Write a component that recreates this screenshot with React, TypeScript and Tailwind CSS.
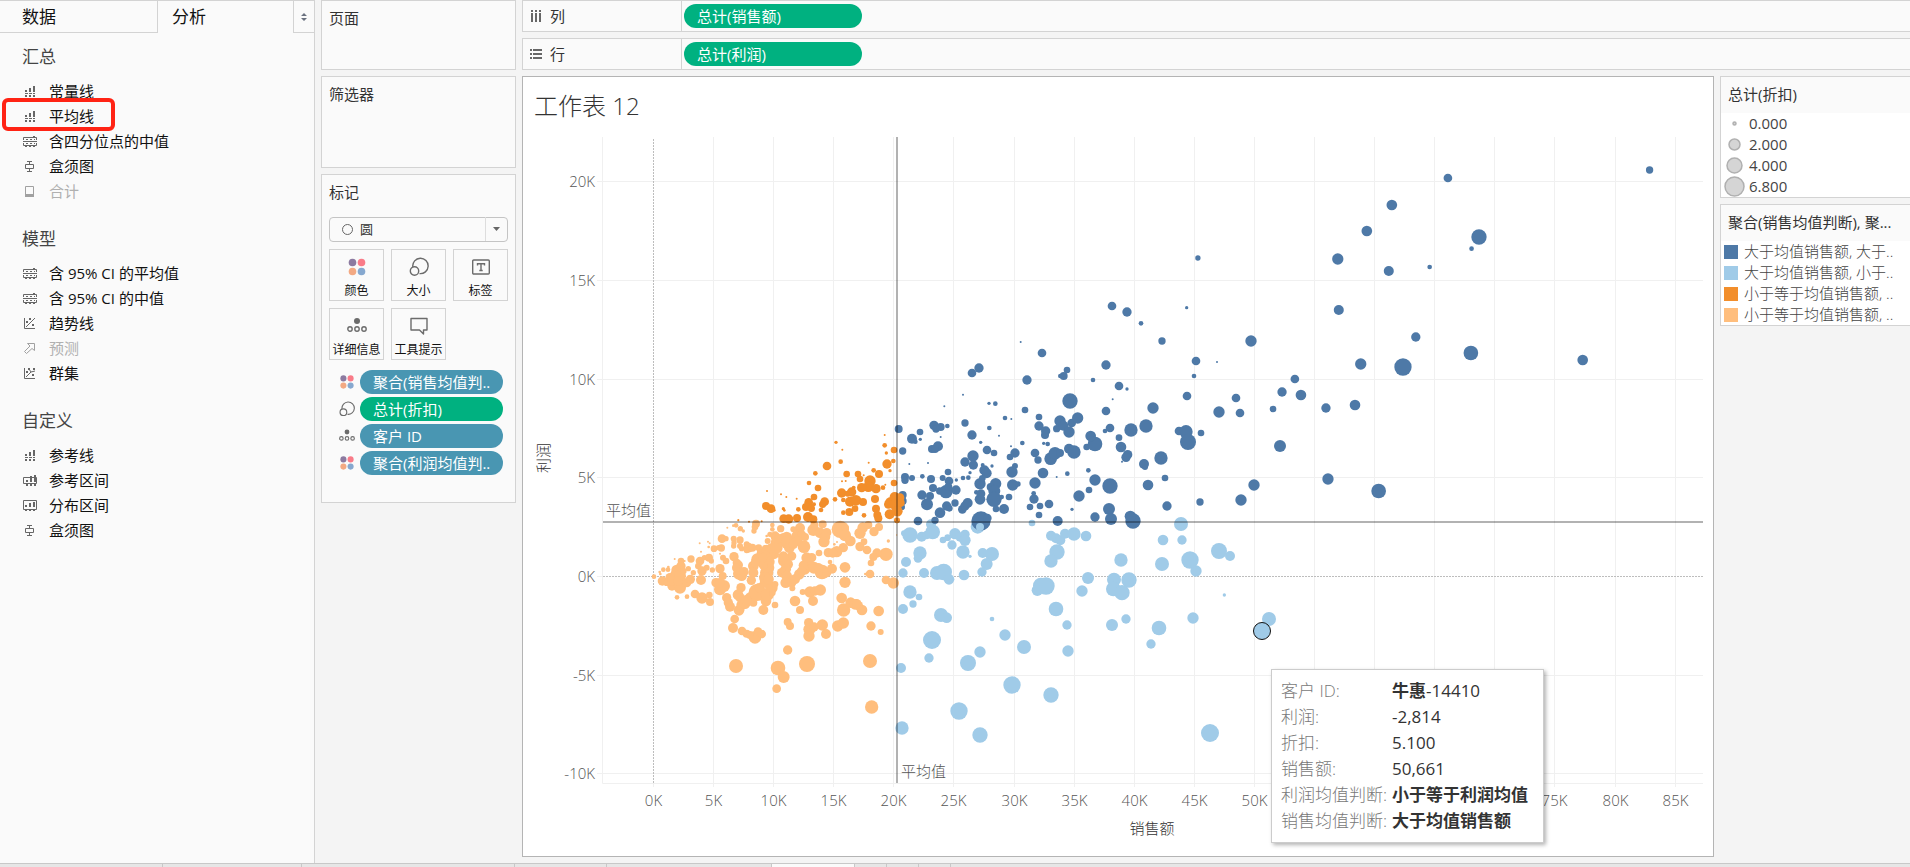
import React from "react";

const SANS = "font-['Open_Sans','Noto_Sans_CJK_SC',sans-serif]";

/* ── Sidebar icons ── */

type IconKind = "bars" | "quartile" | "box" | "total" | "trend" | "forecast" | "cluster" | "band" | "dist";

const dots = (y: number) => (
    <>
        <rect x="3" y={y} width="2" height="2" />
        <rect x="7" y={y} width="2" height="2" />
        <rect x="11" y={y} width="2" height="2" />
    </>
);

const PaneIcon: React.FC<{ kind: IconKind; muted?: boolean }> = ({ kind, muted }) => (
    <svg
        width="16"
        height="14"
        viewBox="0 0 16 14"
        className={muted ? "text-[#a0a0a0]" : "text-[#666]"}
        fill="currentColor"
        stroke="none"
        aria-hidden="true"
    >
        {kind === "bars" && (
            <>
                <rect x="2" y="5" width="2" height="2" />
                <rect x="6" y="3" width="2" height="4" />
                <rect x="10" y="1" width="2" height="6" />
                <path d="M2 8.5h10" stroke="currentColor" strokeDasharray="3 1" />
                <rect x="2" y="10" width="2" height="2" />
                <rect x="6" y="10" width="2" height="2" />
                <rect x="10" y="10" width="2" height="2" />
            </>
        )}
        {kind === "quartile" && (
            <>
                <path d="M.5 5V2.5h13V5M.5 8v2.5h13V8" fill="none" stroke="currentColor" />
                <path d="M0 6.500h14" stroke="currentColor" />
                <path d="M3 4.500h9M3 8.500h9" stroke="currentColor" strokeDasharray="2 2" />
                <rect x="2" y="11" width="2" height="1" />
                <rect x="6" y="11" width="2" height="1" />
                <rect x="10" y="11" width="2" height="1" />
                <rect x="10" y="1" width="2" height="1" />
            </>
        )}
        {kind === "box" && (
            <path d="M4 1.500h5M6.500 1.500V4M2.500 4.500h8v4h-8zM6.500 9v3M4 11.500h5" fill="none" stroke="currentColor" />
        )}
        {kind === "total" && (
            <>
                <path d="M2.500 1.500h8v10h-8z" fill="none" stroke="currentColor" />
                <rect x="2" y="9" width="9" height="3" />
            </>
        )}
        {(kind === "trend" || kind === "cluster") && (
            <path d="M1.500 1v10.500H12" fill="none" stroke="currentColor" />
        )}
        {kind === "trend" && (
            <>
                <path d="M3 10L12 1" stroke="currentColor" />
                <rect x="3" y="4" width="2" height="2" />
                <rect x="6" y="1" width="2" height="2" />
                <rect x="9" y="7" width="2" height="2" />
            </>
        )}
        {kind === "cluster" && (
            <>
                <path d="M3 10l5-5 4-1M6 2l2 3" stroke="currentColor" fill="none" />
                <rect x="3" y="4" width="2" height="2" />
                <rect x="5" y="1" width="2" height="2" />
                <rect x="10" y="1" width="2" height="2" />
                <rect x="9" y="7" width="2" height="2" />
            </>
        )}
        {kind === "forecast" && (
            <path d="M4.500 1.500h7v7l-2.500-2-5.500 5-2-2 5.500-5.500z" fill="none" stroke="currentColor" />
        )}
        {kind === "band" && (
            <>
                <path d="M.5 3.500h13v6H.5z" fill="none" stroke="currentColor" />
                <rect x="3" y="6" width="2" height="2" />
                <rect x="7" y="2" width="2" height="6" />
                <rect x="11" y="1" width="2" height="7" />
                {dots(10)}
            </>
        )}
        {kind === "dist" && (
            <>
                <path d="M.5 1.500h13v9H.5z" fill="none" stroke="currentColor" />
                <rect x="2" y="6" width="2" height="2" />
                <rect x="6" y="4" width="2" height="4" />
                <rect x="10" y="3" width="2" height="5" />
                <rect x="2" y="11" width="2" height="1" />
                <rect x="6" y="11" width="2" height="1" />
                <rect x="10" y="11" width="2" height="1" />
            </>
        )}
    </svg>
);

/* ── Marks card icons ── */

type MarkKind = "color" | "size" | "label" | "detail" | "tooltip";

const MarkIcon: React.FC<{ kind: MarkKind; small?: boolean }> = ({ kind, small }) => (
    <svg width={small ? 16 : 20} height={small ? 16 : 20} viewBox="0 0 20 20" fill="none" stroke="#6b6b6b" strokeWidth="1.4" aria-hidden="true">
        {kind === "color" && (
            <g stroke="none">
                <circle cx="5.500" cy="5.500" r="3.800" fill="#8c7aa0" />
                <circle cx="14.500" cy="5.500" r="3.800" fill="#f97b88" />
                <circle cx="5.500" cy="14.500" r="3.800" fill="#f3a983" />
                <circle cx="14.500" cy="14.500" r="3.800" fill="#86a8cf" />
            </g>
        )}
        {kind === "size" && (
            <>
                <path d="M3.800 9.800A7.700 7.700 0 1 1 10.500 16.600" />
                <circle cx="5.500" cy="14" r="4.200" />
            </>
        )}
        {kind === "label" && (
            <>
                <rect x="1.700" y="3" width="16.600" height="14" rx="1" />
                <path d="M6.500 8.500V6.700h7v1.800M10 6.700v7M8.300 13.500h3.400" />
            </>
        )}
        {kind === "detail" && (
            <>
                <circle cx="10" cy="5" r="3" fill="#6b6b6b" stroke="none" />
                <circle cx="3" cy="13" r="2.200" />
                <circle cx="10" cy="13" r="2.200" />
                <circle cx="17" cy="13" r="2.200" />
            </>
        )}
        {kind === "tooltip" && <path d="M2 2.500h16v11.500h-3.500v4l-4-4H2z" strokeLinejoin="round" />}
    </svg>
);

/* ── Data ── */

interface PaneItem {
    label: string;
    icon: IconKind;
    muted?: boolean;
    marked?: boolean;
}

const sections: { title: string; items: PaneItem[] }[] = [
    {
        title: "汇总",
        items: [
            { label: "常量线", icon: "bars" },
            { label: "平均线", icon: "bars", marked: true },
            { label: "含四分位点的中值", icon: "quartile" },
            { label: "盒须图", icon: "box" },
            { label: "合计", icon: "total", muted: true },
        ],
    },
    {
        title: "模型",
        items: [
            { label: "含 95% CI 的平均值", icon: "quartile" },
            { label: "含 95% CI 的中值", icon: "quartile" },
            { label: "趋势线", icon: "trend" },
            { label: "预测", icon: "forecast", muted: true },
            { label: "群集", icon: "cluster" },
        ],
    },
    {
        title: "自定义",
        items: [
            { label: "参考线", icon: "bars" },
            { label: "参考区间", icon: "band" },
            { label: "分布区间", icon: "dist" },
            { label: "盒须图", icon: "box" },
        ],
    },
];

const markButtons: { label: string; kind: MarkKind }[] = [
    { label: "颜色", kind: "color" },
    { label: "大小", kind: "size" },
    { label: "标签", kind: "label" },
    { label: "详细信息", kind: "detail" },
    { label: "工具提示", kind: "tooltip" },
];

const markPills: { label: string; kind: MarkKind; color: string }[] = [
    { label: "聚合(销售均值判..", kind: "color", color: "bg-[#4996b2]" },
    { label: "总计(折扣)", kind: "size", color: "bg-[#00b180]" },
    { label: "客户 ID", kind: "detail", color: "bg-[#4996b2]" },
    { label: "聚合(利润均值判..", kind: "color", color: "bg-[#4996b2]" },
];

const sizeLegend = [
    { label: "0.000", r: 1.5 },
    { label: "2.000", r: 5.5 },
    { label: "4.000", r: 7.5 },
    { label: "6.800", r: 9.5 },
];

const colorLegend = [
    { label: "大于均值销售额, 大于..", color: "bg-[#4e79a7]" },
    { label: "大于均值销售额, 小于..", color: "bg-[#a0cbe8]" },
    { label: "小于等于均值销售额, ..", color: "bg-[#f28e2b]" },
    { label: "小于等于均值销售额, ..", color: "bg-[#ffbe7d]" },
];

const tooltipRows = [
    { label: "客户 ID:", strong: "牛惠", rest: "-14410" },
    { label: "利润:", rest: "-2,814" },
    { label: "折扣:", rest: "5.100" },
    { label: "销售额:", rest: "50,661" },
    { label: "利润均值判断:", strong: "小于等于利润均值" },
    { label: "销售均值判断:", strong: "大于均值销售额" },
];

const sheetTabs = [
    { width: "w-[163px]" },
    { width: "w-[139px]" },
    { width: "w-[213px]" },
    { width: "w-[92px]" },
    { width: "w-[165px]" },
    { width: "w-[83px]", active: true },
    { width: "w-8" },
    { width: "w-8" },
    { width: "w-8" },
];

/* Each series lists "x,y,radius" marks relative to its own origin. */
interface Series {
    fill: string;
    ox: number;
    oy: number;
    sx: number;
    marks: string;
}

const series: Series[] = [
    {
        fill: "#ffbe7d", ox: 520, oy: 400, sx: 3,
        marks: `402,527,7 419,513,4 421,519,4 430,506,7 444,506,7 445,498,4 464,474,3 427,540,14 440,545,10 450,530,14 456,555,14
465,520,14 470,507,16 483,480,10 483,495,14 480,560,18 480,525,18 471,589,7 501,587,7 494,480,3 500,545,14 513,474,11 505,503,8
511,535,14 520,515,8 525,579,13 539,427,3 543,452,3 540,480,13 535,495,10 546,510,14 543,537,15 546,591,17 564,422,3 569,427,3
566,438,4 553,470,8 567,470,12 574,480,8 560,500,9 568,582,10 570,603,12 582,443,10 604,441,11 606,413,13 596,440,8 618,413,8
609,470,9 618,480,10 600,503,14 577,507,8 588,545,14 608,525,12 600,565,18 612,555,18 600,458,3 622,380,3 640,374,4 648,373,7
655,357,3 661,383,8 670,390,5 641,413,9 642,425,8 641,435,8 660,417,11 660,435,9 665,443,8 642,467,14 650,485,12 655,492,14
657,518,18 665,524,16 655,507,14 663,560,14 654,581,16 620,590,14 625,605,14 630,617,15 657,628,16 665,612,16 675,608,16
690,590,16 708,368,12 702,390,8 705,378,10 680,430,9 685,440,15 680,448,9 716,440,10 697,440,12 725,457,15 712,475,18 700,495,16
700,515,15 694,538,14 712,574,26 735,545,16 740,515,20 745,500,18 738,600,16 742,580,20 730,627,15 765,612,10 757,372,7
782,383,11 757,385,7 740,405,4 750,400,8 743,420,9 765,405,14 770,425,18 740,447,16 755,442,16 762,460,15 738,470,18 748,482,16
755,560,18 765,550,10 730,492,14 790,412,16 800,408,16 805,425,22 808,440,16 840,381,15 830,405,16 845,402,14 855,408,12
852,437,19 820,385,9 833,420,15 790,480,16 800,475,12 803,490,16 815,465,14 790,467,16 797,505,16 785,515,14 800,525,16
797,545,16 815,545,14 825,535,15 817,562,9 838,520,16 855,505,16 865,490,16 860,470,16 875,470,14 882,500,18 906,513,22
895,500,14 920,515,14 936,503,15 930,483,7 897,456,10 880,387,18 883,373,12 908,370,12 900,395,16 920,395,14 915,407,16
912,422,17 961,385,26 975,381,12 975,403,18 991,420,16 943,430,4 951,423,3 970,440,14 950,452,17 925,455,14 938,456,14
975,499,16 975,544,17 965,591,16 1036,519,4 1050,519,13 1053,486,10 1098,460,20 1071,456,14 1060,468,12 1041,447,13 1020,437,14
1032,422,10 1020,397,17 1028,380,16 1045,372,12 1062,392,14 1077,378,12 1105,420,5 1130,402,2 1098,537,13 1120,546,17
848,573,9 870,573,17 885,570,14 901,567,17 879,600,15 825,600,16 840,627,12 992,605,16 971,627,20 1005,610,16 1026,627,16
1015,614,14 1076,630,16 644,654,13 639,681,15 666,690,13 680,698,12 705,709,19 690,702,12 714,692,13 725,699,13 803,663,12
810,675,12 866,665,14 868,685,18 882,678,14 907,672,17 867,705,17 918,699,15 953,675,17 970,666,17 1053,675,14 1082,693,9
803,747,14 648,795,21 774,801,22 861,789,24 791,828,18 770,863,13 1050,780,21 1055,918,20 735,440,8 770,440,18 660,590,14
700,605,12 735,530,18 745,535,16 718,560,14 850,493,14 845,510,14 728,470,14 706,485,14 770,412,16 648,500,12 672,512,14
455,540,14 475,540,14 490,510,10 600,545,14 678,598,16 757,575,10 820,430,14 1010,608,14`,
    },
    {
        fill: "#a0cbe8", ox: 880, oy: 500, sx: 3,
        marks: `153,70,15 72,97,9 90,102,23 125,107,15 140,102,13 158,93,22 189,117,10 203,110,10 225,98,17 255,100,14 240,108,14
255,118,17 216,132,14 120,156,20 114,172,13 249,153,20 270,166,5 308,156,15 336,159,21 320,189,18 306,213,14 78,183,15
69,216,14 132,216,15 171,216,21 191,213,25 207,235,16 252,222,16 90,273,20 117,288,10 99,309,11 69,324,15 183,342,21 200,350,16
336,354,7 156,417,27 147,471,14 63,501,15 264,486,24 300,453,17 375,402,17 432,438,21 396,552,26 237,630,26 66,681,20
300,702,23 513,582,23 564,450,17 561,372,14 528,324,22 483,254,24 498,255,26 472,268,17 606,270,17 624,231,18 456,66,10
293,77,21 513,104,15 528,112,15 541,118,15 555,98,15 582,99,20 618,105,16 531,153,23 513,180,20 723,177,20 702,236,21
747,237,23 700,264,22 726,275,23 696,372,18 738,354,14 837,381,22 813,429,14 939,351,17 849,117,16 906,117,14 903,69,21
846,189,21 930,177,26 948,210,17 1017,150,24 1050,165,15 1033,282,5 1167,354,21 990,696,27`,
    },
    {
        fill: "#4e79a7", ox: 880, oy: 280, sx: 3,
        marks: `56,444,12 68,510,11 96,473,15 106,482,7 120,453,10 121,475,5 162,433,14 168,444,11 182,438,12 202,435,7 193,376,3
249,341,3 327,367,5 346,368,7 375,411,7 394,414,3 255,426,11 276,462,14 328,441,7 357,464,3 302,484,5 182,468,3 156,504,12
174,496,15 165,504,12 88,549,3 144,546,3 75,588,12 75,598,11 96,591,9 127,586,7 153,594,12 188,591,9 204,573,10 207,600,13
229,597,5 249,591,7 265,590,7 270,575,5 255,543,14 279,525,17 280,552,14 308,552,6 336,555,5 321,507,13 342,516,10 313,568,15
320,577,15 390,528,10 405,516,14 393,496,3 427,486,7 405,555,9 396,573,17 159,621,12 126,642,14 150,645,12 141,670,18
179,630,11 198,632,20 228,627,14 205,618,12 200,675,14 208,682,10 225,666,11 247,685,13 255,675,14 263,666,15 180,695,16
114,720,13 165,718,11 300,608,17 307,592,10 289,634,7 300,655,16 303,638,13 347,608,17 332,618,12 343,630,18 342,655,23
365,648,7 387,648,10 348,684,10 372,684,15 398,612,17 414,609,8 303,720,29 322,711,13 68,642,12 68,660,12 65,678,10
465,516,13 474,537,11 489,576,16 465,606,17 461,637,7 462,654,14 450,678,10 480,675,10 507,669,13 477,702,10 533,720,15
530,588,3 562,578,7 576,685,5 597,645,17 625,568,7 645,597,17 690,615,23 627,627,10 645,708,14 687,684,18 693,714,18
759,720,23 751,706,17 477,408,10 477,435,14 497,450,14 495,462,12 540,420,17 530,443,11 550,434,15 567,453,17 575,426,13
593,411,17 491,487,5 503,489,7 512,533,19 525,517,19 540,516,12 567,503,15 582,513,20 620,498,10 645,489,22 632,465,16
675,450,7 690,441,13 717,470,10 723,498,16 743,521,14 738,529,14 726,542,3 792,549,15 795,558,9 804,612,16 843,531,20
855,591,10 861,675,14 753,447,20 798,435,20 819,381,17 678,390,13 698,355,3 717,315,13 741,324,5 639,297,7 678,252,14
570,360,23 551,285,12 541,285,7 561,267,10 441,297,14 435,387,10 486,216,13 422,183,3 276,276,13 297,261,14 696,75,13
741,93,14 783,127,7 846,180,11 920,80,5 1113,180,17 948,240,13 1011,243,3 942,285,7 921,345,13 1068,351,13 1017,393,17
1080,396,13 1179,384,10 963,456,10 897,450,13 918,452,20 924,483,24 960,663,11 1083,657,17 1122,612,17`,
    },
    {
        fill: "#4e79a7", ox: 1180, oy: 120, sx: 2.96,
        marks: `296,975,18 302,813,14 340,774,13 358,822,16 432,861,14 518,852,16 438,1074,17 588,1110,22 535,729,17 660,738,26
698,648,14 861,696,22 1192,717,16 470,567,15 618,450,15 739,438,7 863,383,7 885,348,23 467,414,17 553,330,16 627,252,16
793,171,13 1390,147,11 53,411,8`,
    },
    {
        fill: "#f28e2b", ox: 520, oy: 400, sx: 3,
        marks: `948,124,5 967,146,3 1094,102,3 1094,133,7 1099,156,5 1122,147,10 962,182,7 1046,185,3 1120,180,7 1101,189,14
921,195,13 886,217,7 980,219,10 1014,219,10 1031,223,3 1061,208,7 1077,219,12 1110,209,5 867,246,7 894,261,10 966,241,3
977,240,3 1020,234,10 1050,240,17 1045,257,16 1025,260,14 1068,263,14 1089,260,7 1096,251,3 1122,246,10 741,270,3 783,280,3
799,288,3 830,293,3 882,288,10 965,276,14 995,273,14 1001,260,6 983,278,9 945,295,7 970,297,7 866,304,13 914,302,13 908,310,11
990,302,15 1008,298,16 1029,303,12 1065,294,12 1068,323,12 1072,342,12 1075,352,12 1032,343,7 903,327,7 882,310,6 858,318,12
874,322,11 835,325,7 790,323,5 793,328,4 738,315,12 753,323,13 763,328,4 1005,323,10 988,333,12 970,335,7 791,353,13
806,354,14 831,351,12 864,348,15 880,355,12 687,362,3 655,358,3 725,361,3 1112,305,17 1124,288,15 1105,310,13 1128,312,18
1109,340,15 1132,331,16 1140,290,13 1142,305,12 1131,358,9`,
    },
    {
        fill: "#a0cbe8", ox: 880, oy: 500, sx: 3,
        marks: "300,78,12",
    },
];

const parseMarks = (s: Series) =>
    s.marks.split(/\s+/).map((m) => {
        const [x, y, r] = m.split(",").map(Number);
        return { x: s.ox + x / s.sx, y: s.oy + y / 3, r: r / 3 };
    });

const xTicks = Array.from({ length: 18 }, (_, i) => ({ value: i * 5, x: Math.floor(653.4 + i * 60.1) + 0.5 }));
const yTicks = [20, 15, 10, 5, 0, -5, -10].map((v) => ({ label: `${v}K`, y: Math.floor(575.4 - v * 19.74) + 0.5 }));

// the open tooltip sits over these axis labels
const isCovered = (value: number) => value > 50 && value < 75;

/* ── Scatter chart ── */

const Scatter: React.FC = () => (
    <svg viewBox="523 130 1190 725" className="block w-full h-auto font-light" role="img" aria-label="工作表 12">
        <g stroke="#f0f0f0" fill="none">
            {xTicks.map((t) => (
                <path key={t.value} d={`M${t.x} 136V786`} />
            ))}
            {yTicks.map((t) => (
                <path key={t.label} d={`M597 ${t.y}H1703`} />
            ))}
            <path d="M602.5 136V782.5H1703" />
        </g>
        <path d="M653.5 136V782M603 575.5H1703" fill="none" stroke="#fff" />
        <path d="M653.5 138V782M603 575.5H1703" fill="none" stroke="#bdbdbd" strokeDasharray="2 1" />

        {series.map((s, i) => (
            <g key={i} fill={s.fill}>
                {parseMarks(s).map((m, j) => (
                    <circle key={j} cx={m.x} cy={m.y} r={m.r} />
                ))}
            </g>
        ))}
        <circle cx="1262" cy="630" r="8.500" fill="#a0cbe8" stroke="#111" />

        {/* Average lines */}
        <path d="M603 521H1703M897 136V782" stroke="#000" strokeOpacity="0.3" strokeWidth="2" />

        <g className="fill-[#555] text-[15px]">
            {yTicks.map((t) => (
                <text key={t.label} x="595" y={t.y + 5} textAnchor="end">{t.label}</text>
            ))}
            {xTicks.filter((t) => !isCovered(t.value)).map((t) => (
                <text key={t.value} x={t.x} y="805" textAnchor="middle">{`${t.value}K`}</text>
            ))}
            <text x="606" y="515">平均值</text>
            <text x="901" y="776">平均值</text>
        </g>
        <g className="fill-[#333] text-[15px]">
            <text x="1152" y="833" textAnchor="middle">销售额</text>
            <text transform="translate(549 457) rotate(-90)" textAnchor="middle">利润</text>
        </g>
    </svg>
);

const Shelf: React.FC<{ label: string; pill: string; vertical?: boolean }> = ({ label, pill, vertical }) => (
    <div className="flex h-8 border border-r-0 border-[#d3d3d3] bg-[#fafafa]">
        <div className="flex w-[159px] items-center gap-2 border-r border-[#d3d3d3] pl-[7px] text-[15px] text-[#333]">
            <svg width="12" height="12" viewBox="0 0 12 12" fill="#666" aria-hidden="true">
                {vertical ? (
                    <path d="M1 0h2v2H1zM5 0h2v2H5zM9 0h2v2H9zM1 3h2v9H1zM5 3h2v9H5zM9 3h2v9H9z" />
                ) : (
                    <path d="M0 1h2v2H0zM0 5h2v2H0zM0 9h2v2H0zM3 1h9v2H3zM3 5h9v2H3zM3 9h9v2H3z" />
                )}
            </svg>
            {label}
        </div>
        <button className="ml-0.5 h-6 w-[178px] self-center rounded-full bg-[#00b180] pl-[13px] text-left text-[15px] leading-6 text-white">
            {pill}
        </button>
    </div>
);

const Card: React.FC<{ title: string; className?: string; children?: React.ReactNode }> = ({ title, className, children }) => (
    <section className={`border border-[#d3d3d3] bg-[#fafafa] px-[7px] pt-[5px] ${className ?? ""}`}>
        <h2 className="text-[15px] leading-6 text-[#333]">{title}</h2>
        {children}
    </section>
);

const AnalyticsPane: React.FC = () => (
    <aside className="w-[315px] shrink-0 border-t border-r border-[#d3d3d3] bg-[#fafafa]">
        <div className="flex h-8 text-[17px] leading-6 text-[#111]">
            <button className="w-[158px] border-r border-b border-[#d3d3d3] pl-[22px] text-left">数据</button>
            <button className="flex-1 pl-[14px] text-left">分析</button>
            <button aria-label="菜单" className="flex w-[21px] items-center justify-center border-b border-l border-[#d3d3d3]">
                <svg width="6" height="8" viewBox="0 0 6 8" fill="#6b7280" aria-hidden="true">
                    <path d="M3 0l3 3H0zM3 8L0 5h6z" />
                </svg>
            </button>
        </div>
        <div className="flex flex-col gap-[23px] pt-3">
            {sections.map((section) => (
                <section key={section.title}>
                    <h2 className="mb-2.5 pl-[22px] text-[17px] leading-6 text-[#444]">{section.title}</h2>
                    <ul>
                        {section.items.map((item) => (
                            <li key={item.label} className="relative flex h-[25px] items-center gap-[10px] pl-[23px] text-[15px]">
                                <PaneIcon kind={item.icon} muted={item.muted} />
                                <span className={item.muted ? "text-[#b0b0b0]" : "text-[#111]"}>{item.label}</span>
                                {item.marked && (
                                    <span className="absolute -top-1.5 left-0.5 h-[33px] w-[113px] rounded-md border-4 border-[#ff2314]" />
                                )}
                            </li>
                        ))}
                    </ul>
                </section>
            ))}
        </div>
    </aside>
);

const MarksCard: React.FC = () => (
    <Card title="标记" className="h-[329px]">
        <div className="relative mt-3">
            <select aria-label="标记类型" className="h-[25px] w-full appearance-none rounded-sm border border-[#c4c4c4] bg-[#fafafa] pl-[30px] text-[13px] text-[#333]">
                <option>圆</option>
            </select>
            <span className="pointer-events-none absolute inset-y-0 left-[13px] flex items-center">
                <span className="size-[11px] rounded-full border border-[#666]" />
            </span>
            <span className="pointer-events-none absolute inset-y-px right-px flex w-[22px] items-center justify-center border-l border-[#ddd]">
                <svg width="7" height="4" viewBox="0 0 7 4" fill="#666" aria-hidden="true"><path d="M0 0h7L3.500 4z" /></svg>
            </span>
        </div>
        <div className="mt-[7px] grid grid-cols-3 gap-[7px]">
            {markButtons.map((b) => (
                <button key={b.label} className="flex h-[52px] flex-col items-center justify-between border border-[#d3d3d3] bg-[#fafafa] pt-[7px] text-xs leading-[18px] whitespace-nowrap text-[#111]">
                    <MarkIcon kind={b.kind} />
                    {b.label}
                </button>
            ))}
        </div>
        <ul className="mt-2.5 flex flex-col gap-[3px]">
            {markPills.map((p) => (
                <li key={p.label} className="flex items-center gap-[5px] pl-[10px]">
                    <MarkIcon kind={p.kind} small />
                    <button className={`h-6 w-[143px] rounded-full pl-[13px] text-left text-[15px] leading-6 whitespace-nowrap text-white ${p.color}`}>
                        {p.label}
                    </button>
                </li>
            ))}
        </ul>
    </Card>
);

const Legend: React.FC<{ title: string; children: React.ReactNode }> = ({ title, children }) => (
    <section className="overflow-hidden border border-r-0 border-[#d3d3d3] bg-white">
        <h2 className="h-9 bg-[#fafafa] pt-[5px] pl-[7px] text-[15px] leading-6 whitespace-nowrap text-[#333]">{title}</h2>
        <ul>{children}</ul>
    </section>
);

export default function App() {
    return (
        <div className={`flex min-h-screen flex-col overflow-hidden bg-[#f4f4f4] ${SANS}`}>
            <div className="flex flex-1 gap-1.5">
                <AnalyticsPane />
                <div className="flex w-[195px] shrink-0 flex-col gap-1.5">
                    <Card title="页面" className="h-[70px]" />
                    <Card title="筛选器" className="h-[92px]" />
                    <MarksCard />
                </div>
                <main className="flex min-w-0 flex-1 flex-col gap-1.5 pb-1.5">
                    <Shelf label="列" pill="总计(销售额)" vertical />
                    <Shelf label="行" pill="总计(利润)" />
                    <div className="flex flex-1 gap-1.5">
                        <section className="relative min-w-0 flex-1 border border-[#b4b4b4] bg-white">
                            <h1 className="h-[54px] pt-[11px] pl-[11px] text-2xl leading-9 font-light text-[#333]">工作表 12</h1>
                            <Scatter />
                            <dl className="absolute top-[592px] left-[748px] w-[273px] border border-[#ccc] bg-white px-[9px] py-2 text-[17px] leading-[26px] shadow-[2px_2px_4px_rgba(0,0,0,0.3)]">
                                {tooltipRows.map((row) => (
                                    <div key={row.label} className="flex whitespace-nowrap">
                                        <dt className="w-[111px] shrink-0 font-light text-[#787878]">{row.label}</dt>
                                        <dd className="text-[#333]">
                                            {row.strong && <b className="font-bold">{row.strong}</b>}
                                            {row.rest}
                                        </dd>
                                    </div>
                                ))}
                            </dl>
                        </section>
                        <div className="flex w-[190px] shrink-0 flex-col gap-1.5">
                            <Legend title="总计(折扣)">
                                {sizeLegend.map((row) => (
                                    <li key={row.label} className="flex h-[21px] items-center gap-1 pl-[3px] text-[15px] text-[#444]">
                                        <svg width="21" height="21" viewBox="0 0 21 21" aria-hidden="true">
                                            <circle cx="10.500" cy="10.500" r={row.r} fill="#d5d5d5" stroke="#b0b0b0" strokeWidth="1.500" />
                                        </svg>
                                        {row.label}
                                    </li>
                                ))}
                            </Legend>
                            <Legend title="聚合(销售均值判断), 聚...">
                                {colorLegend.map((row, i) => (
                                    <li key={i} className="flex h-[21px] items-center gap-1.5 pl-[3px] text-[15px] font-light whitespace-nowrap text-[#444]">
                                        <span className={`size-[14px] shrink-0 ${row.color}`} />
                                        {row.label}
                                    </li>
                                ))}
                            </Legend>
                        </div>
                    </div>
                </main>
            </div>
            <footer className="flex h-1 border-t border-[#c8c8c8] bg-[#e6e6e6]">
                {sheetTabs.map((tab, i) => (
                    <div key={i} className={`border-r border-[#c8c8c8] ${tab.width} ${tab.active ? "bg-[#fafafa]" : ""}`} />
                ))}
            </footer>
        </div>
    );
}
